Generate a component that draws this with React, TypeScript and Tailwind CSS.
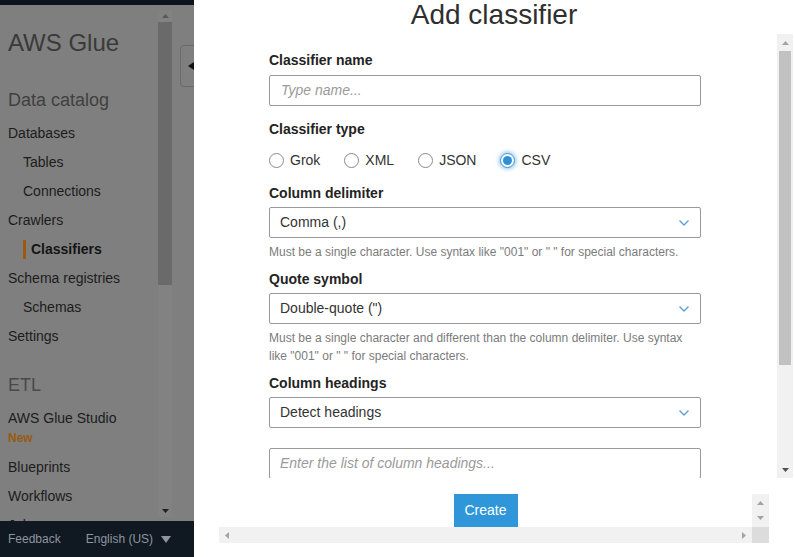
import React from "react";

const font = { fontFamily: '"Liberation Sans", Arial, sans-serif' };

function Chevron() {
  return (
    <svg width="12" height="8" viewBox="0 0 12 8" className="shrink-0">
      <path d="M1.5 1.5 L6 6 L10.5 1.5" fill="none" stroke="#5a9fd6" strokeWidth="1.4" />
    </svg>
  );
}

function Select({ value }: { value: string }) {
  return (
    <div className="h-[31px] border border-[#999] rounded-[2px] flex items-center justify-between pl-[10px] pr-[10px] text-[14px] text-[#333]">
      <span>{value}</span>
      <Chevron />
    </div>
  );
}

function Label({ children, mt }: { children: React.ReactNode; mt: string }) {
  return <div className={`${mt} text-[14px] leading-[20px] font-bold text-[#232323]`}>{children}</div>;
}

function Radio({ label, checked }: { label: string; checked?: boolean }) {
  return (
    <div className="flex items-center gap-[6px]">
      {checked ? (
        <div className="w-[15px] h-[15px] rounded-full border-[1.5px] border-[#2d8fd5] flex items-center justify-center shadow-[0_0_4px_1px_rgba(60,150,220,0.6)]">
          <div className="w-[9px] h-[9px] rounded-full bg-[#2d8fd5]" />
        </div>
      ) : (
        <div className="w-[15px] h-[15px] rounded-full border border-[#8a8a8a] bg-white" />
      )}
      <span className="text-[14px] text-[#333]">{label}</span>
    </div>
  );
}

function NavItem({ children, indent, active }: { children: React.ReactNode; indent?: boolean; active?: boolean }) {
  return (
    <div className={`h-[29px] leading-[29px] text-[14px] text-[#1c1c1c] ${indent ? "pl-[15px]" : ""} flex items-center whitespace-nowrap`}>
      {active ? (
        <>
          <div className="w-[3px] h-[19px] bg-[#9a5a12] mr-[5px]" />
          <span className="font-bold text-[#151515]">{children}</span>
        </>
      ) : (
        <span>{children}</span>
      )}
    </div>
  );
}

export default function App() {
  return (
    <div className="w-[794px] h-[557px] flex overflow-hidden bg-white" style={font}>
      {/* Sidebar (dimmed) */}
      <div className="w-[194px] h-full flex flex-col bg-[#7f7f7f] relative shrink-0">
        <div className="h-[5px] bg-[#0d141d]" />
        <div className="flex-1 flex min-h-0 overflow-hidden">
          <div className="w-[158px] pl-[8px] overflow-hidden">
            <div className="mt-[23px] text-[24px] leading-[30px] text-[#3a3a3a] whitespace-nowrap">AWS Glue</div>
            <div className="mt-[30px] text-[18px] leading-[24px] text-[#404040] whitespace-nowrap">Data catalog</div>
            <div className="mt-[7px]">
              <NavItem>Databases</NavItem>
              <NavItem indent>Tables</NavItem>
              <NavItem indent>Connections</NavItem>
              <NavItem>Crawlers</NavItem>
              <NavItem indent active>Classifiers</NavItem>
              <NavItem>Schema registries</NavItem>
              <NavItem indent>Schemas</NavItem>
              <NavItem>Settings</NavItem>
            </div>
            <div className="mt-[22px] text-[18px] leading-[24px] text-[#4a4a4a]">ETL</div>
            <div className="mt-[12px] text-[14px] leading-[18px] text-[#1c1c1c] whitespace-nowrap">AWS Glue Studio</div>
            <div className="mt-[2px] text-[12px] leading-[18px] font-bold text-[#9a5a12]">New</div>
            <div className="mt-[6px]">
              <NavItem>Blueprints</NavItem>
              <NavItem>Workflows</NavItem>
              <NavItem>Jobs</NavItem>
            </div>
          </div>
          {/* sidebar scrollbar */}
          <div className="w-[14px] mt-[5px] mb-[4px] flex flex-col bg-[#828282]">
            <div className="h-[12px] flex items-center justify-center">
              <svg width="7" height="4" viewBox="0 0 7 4"><path d="M0 4 L3.5 0 L7 4 Z" fill="#5a5a5a" /></svg>
            </div>
            <div className="h-[263px] bg-[#6a6a6a]" />
            <div className="flex-1" />
            <div className="h-[12px] flex items-center justify-center">
              <svg width="7" height="4" viewBox="0 0 7 4"><path d="M0 0 L3.5 4 L7 0 Z" fill="#1f1f1f" /></svg>
            </div>
          </div>
        </div>
        <div className="h-[36px] bg-[#101822] flex items-center pl-[8px] text-[12px] text-[#8f959c] gap-[25px] whitespace-nowrap">
          <span>Feedback</span>
          <span className="flex items-center gap-[8px]">
            English (US)
            <svg width="10" height="7" viewBox="0 0 10 7"><path d="M0 0 L10 0 L5 7 Z" fill="#8f959c" /></svg>
          </span>
        </div>
        {/* collapse tab */}
        <div className="absolute left-[180px] top-[45px] w-[16px] h-[42px] border border-[#6a6a6a] rounded-l-[4px] bg-[#7f7f7f] flex items-center justify-end">
          <svg width="6" height="8" viewBox="0 0 6 8" className="mr-[1px]"><path d="M6 0 L0 4 L6 8 Z" fill="#111" /></svg>
        </div>
      </div>

      {/* Right panel */}
      <div className="flex-1 h-full flex flex-col bg-white relative z-10">
        <div className="h-[34px] text-center text-[28px] leading-[29px] text-[#2f2f2f] whitespace-nowrap">Add classifier</div>
        <div className="h-[444px] flex">
          <div className="flex-1 overflow-hidden pl-[75px]">
            <div className="w-[432px] pt-[16px]">
              <Label mt="mt-0">Classifier name</Label>
              <div className="mt-[5px] h-[31px] border border-[#999] rounded-[2px] flex items-center px-[11px] text-[14px] italic text-[#9a9a9a]">Type name...</div>
              <Label mt="mt-[13px]">Classifier type</Label>
              <div className="mt-[11px] h-[20px] flex items-center gap-[24px]">
                <Radio label="Grok" />
                <Radio label="XML" />
                <Radio label="JSON" />
                <Radio label="CSV" checked />
              </div>
              <Label mt="mt-[13px]">Column delimiter</Label>
              <div className="mt-[4px]"><Select value="Comma (,)" /></div>
              <div className="mt-[5px] text-[12px] leading-[18px] text-[#7b7b7b]">Must be a single character. Use syntax like "001" or " " for special characters.</div>
              <Label mt="mt-[8px]">Quote symbol</Label>
              <div className="mt-[4px]"><Select value={'Double-quote (")'} /></div>
              <div className="mt-[5px] text-[12px] leading-[18px] text-[#7b7b7b]">Must be a single character and different than the column delimiter. Use syntax like "001" or " " for special characters.</div>
              <Label mt="mt-[8px]">Column headings</Label>
              <div className="mt-[4px]"><Select value="Detect headings" /></div>
              <div className="mt-[20px] h-[31px] border border-[#999] rounded-[2px] flex items-center px-[10px] text-[14px] italic text-[#9a9a9a]">Enter the list of column headings...</div>
            </div>
          </div>
          {/* main vertical scrollbar */}
          <div className="w-[16px] mr-[1px] bg-[#f1f1f1] flex flex-col">
            <div className="h-[17px] flex items-center justify-center">
              <svg width="7" height="4" viewBox="0 0 7 4"><path d="M0 4 L3.5 0 L7 4 Z" fill="#a3a3a3" /></svg>
            </div>
            <div className="h-[314px] mx-[2px] bg-[#c1c1c1]" />
            <div className="flex-1" />
            <div className="h-[17px] flex items-center justify-center">
              <svg width="7" height="4" viewBox="0 0 7 4"><path d="M0 0 L3.5 4 L7 0 Z" fill="#505050" /></svg>
            </div>
          </div>
        </div>
        {/* bottom scroll region */}
        <div className="mt-[16px] mx-[25px] grid grid-cols-[1fr_17px] grid-rows-[33px_16px]">
          <div className="flex justify-center overflow-hidden">
            <div className="w-[64px] h-[33px] bg-[#2f97d9] text-white text-[14px] flex items-center justify-center">Create</div>
          </div>
          <div className="bg-[#f1f1f1] flex flex-col items-center justify-around py-[2px]">
            <svg width="7" height="4" viewBox="0 0 7 4"><path d="M0 4 L3.5 0 L7 4 Z" fill="#a3a3a3" /></svg>
            <svg width="7" height="4" viewBox="0 0 7 4"><path d="M0 0 L3.5 4 L7 0 Z" fill="#a3a3a3" /></svg>
          </div>
          <div className="bg-[#f1f1f1] flex items-center justify-between px-[6px]">
            <svg width="4" height="7" viewBox="0 0 4 7"><path d="M4 0 L0 3.5 L4 7 Z" fill="#a3a3a3" /></svg>
            <svg width="4" height="7" viewBox="0 0 4 7"><path d="M0 0 L4 3.5 L0 7 Z" fill="#a3a3a3" /></svg>
          </div>
          <div className="bg-[#dcdcdc]" />
        </div>
      </div>
    </div>
  );
}
